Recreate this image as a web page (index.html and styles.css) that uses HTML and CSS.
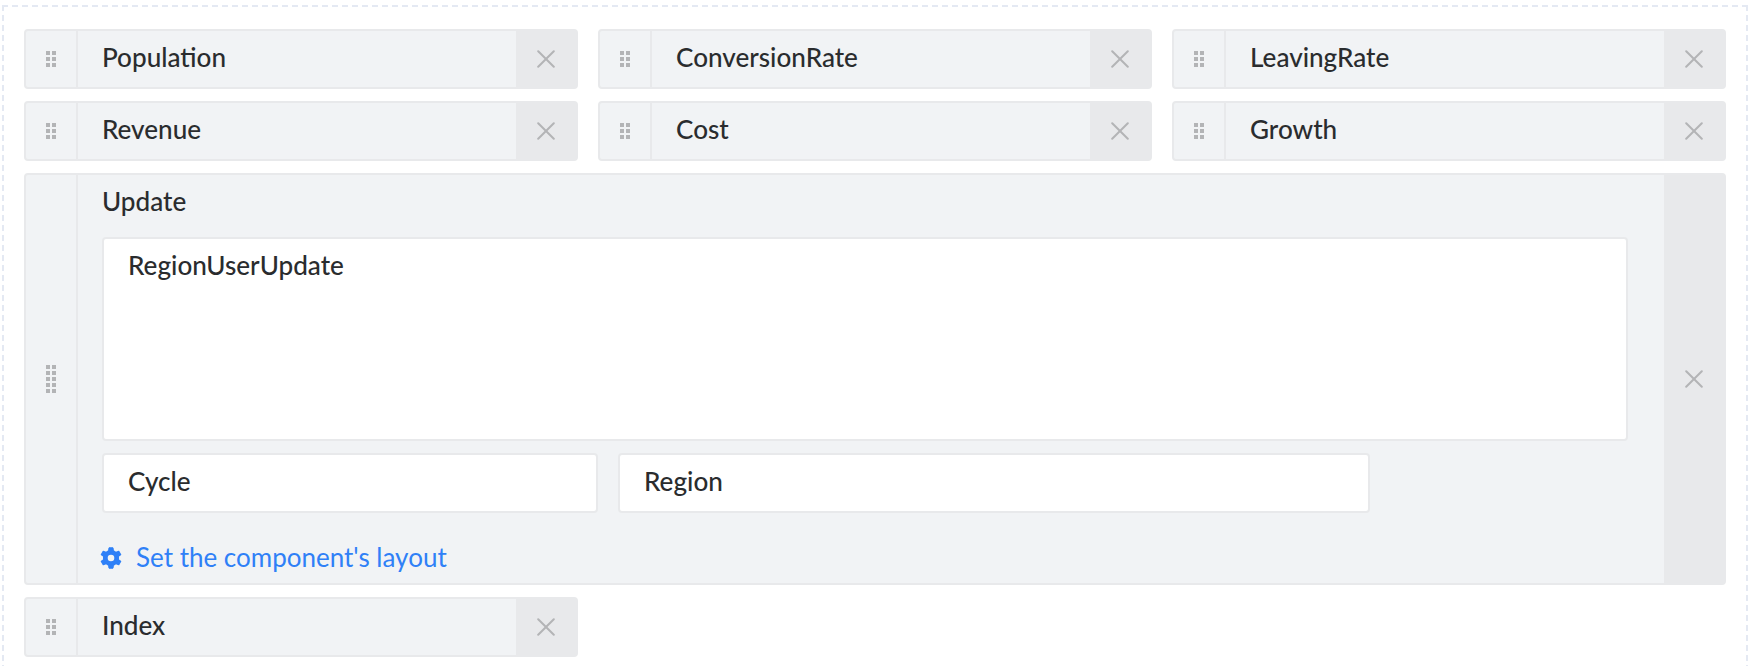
FILE: index.html
```html
<!DOCTYPE html>
<html lang="en">
<head>
<meta charset="utf-8">
<title>Layout editor</title>
<link rel="stylesheet" href="styles.css">
</head>
<body>
<svg class="defs" aria-hidden="true">
  <symbol id="close" viewBox="0 0 18 18"><path d="M1.2 1.2 16.8 16.8M16.8 1.2 1.2 16.8" fill="none" stroke="currentColor" stroke-width="2" stroke-linecap="round"/></symbol>
  <symbol id="dots" viewBox="0 0 10 16"><path d="M0 0h4v4H0zM6 0h4v4H6zM0 6h4v4H0zM6 6h4v4H6zM0 12h4v4H0zM6 12h4v4H6z" fill="currentColor"/></symbol>
  <symbol id="dots-tall" viewBox="0 0 10 28"><path d="M0 0h4v4H0zM6 0h4v4H6zM0 6h4v4H0zM6 6h4v4H6zM0 12h4v4H0zM6 12h4v4H6zM0 18h4v4H0zM6 18h4v4H6zM0 24h4v4H0zM6 24h4v4H6z" fill="currentColor"/></symbol>
</svg>
<main class="canvas">
  <div class="card"><span class="handle"><svg class="dots"><use href="#dots"/></svg></span><span class="label">Population</span><button class="close"><svg class="x"><use href="#close"/></svg></button></div>
  <div class="card"><span class="handle"><svg class="dots"><use href="#dots"/></svg></span><span class="label">ConversionRate</span><button class="close"><svg class="x"><use href="#close"/></svg></button></div>
  <div class="card"><span class="handle"><svg class="dots"><use href="#dots"/></svg></span><span class="label">LeavingRate</span><button class="close"><svg class="x"><use href="#close"/></svg></button></div>
  <div class="card"><span class="handle"><svg class="dots"><use href="#dots"/></svg></span><span class="label">Revenue</span><button class="close"><svg class="x"><use href="#close"/></svg></button></div>
  <div class="card"><span class="handle"><svg class="dots"><use href="#dots"/></svg></span><span class="label">Cost</span><button class="close"><svg class="x"><use href="#close"/></svg></button></div>
  <div class="card"><span class="handle"><svg class="dots"><use href="#dots"/></svg></span><span class="label">Growth</span><button class="close"><svg class="x"><use href="#close"/></svg></button></div>
  <section class="card group">
    <span class="handle"><svg class="dots tall"><use href="#dots-tall"/></svg></span>
    <div class="content">
      <div class="title">Update</div>
      <div class="field area">RegionUserUpdate</div>
      <div class="fields">
        <div class="field cycle">Cycle</div>
        <div class="field region">Region</div>
      </div>
      <a class="link"><svg class="gear" viewBox="0 0 22 22"><g fill="none" stroke="currentColor"><circle cx="11" cy="11" r="5.7" stroke-width="4.8"/><path id="tooth" d="M8.6 3.800 9 .8h4l.4 3z" fill="currentColor" stroke-width="1" stroke-linejoin="round"/><use href="#tooth" transform="rotate(60 11 11)"/><use href="#tooth" transform="rotate(120 11 11)"/><use href="#tooth" transform="rotate(180 11 11)"/><use href="#tooth" transform="rotate(240 11 11)"/><use href="#tooth" transform="rotate(300 11 11)"/></g></svg><span>Set the component's layout</span></a>
    </div>
    <button class="close"><svg class="x"><use href="#close"/></svg></button>
  </section>
  <div class="card"><span class="handle"><svg class="dots"><use href="#dots"/></svg></span><span class="label">Index</span><button class="close"><svg class="x"><use href="#close"/></svg></button></div>
</main>
</body>
</html>
```
FILE: styles.css
```css
* { box-sizing: border-box; }
html { overflow: hidden; background: #fff; }
body {
  margin: 0;
  padding: 5px 8px 0 2px;
  height: 666px;
  overflow: hidden;
  font-family: "Lato Medium", Lato, sans-serif;
  font-size: 26.1px;
  font-weight: 500;
  line-height: 32px;
  color: #2a2c2e;
}
.defs { display: none; }
.canvas {
  height: 746px;
  border: 2px dashed #e4e9f3;
  padding: 22px 20px;
  display: grid;
  grid-template-columns: repeat(3, 1fr);
  grid-auto-rows: min-content;
  gap: 12px 20px;
}
.card {
  display: flex;
  height: 60px;
  border: 2px solid #e8e9eb;
  border-radius: 4px;
  background: #f1f3f5;
}
.handle {
  flex: none;
  width: 52px;
  border-right: 2px solid #e8e9eb;
  display: flex;
  align-items: center;
  justify-content: center;
  color: #b3b4b6;
}
.dots { width: 10px; height: 16px; }
.dots.tall { height: 28px; }
.label { flex: 1; padding: 10px 24px; }
.close {
  flex: none;
  width: 60px;
  padding: 0;
  border: 0;
  background: #e8e9eb;
  color: #b3b4b6;
  display: flex;
  align-items: center;
  justify-content: center;
}
.x { width: 18px; height: 18px; }
.group { grid-column: 1 / -1; height: 412px; }
.content { flex: 1; padding: 10px 36px 0 24px; }
.title { margin-bottom: 20px; }
.field {
  height: 60px;
  padding: 10px 24px;
  border: 2px solid #e8e9eb;
  border-radius: 4px;
  background: #fff;
}
.area { height: 204px; }
.fields { display: flex; gap: 20px; margin-top: 12px; }
.cycle { width: 496px; }
.region { width: 752px; }
.link {
  display: flex;
  align-items: center;
  gap: 14px;
  margin: 28px 0 0 -2px;
  font-family: Lato, sans-serif;
  font-size: 26px;
  font-weight: 400;
  color: #2f80f7;
}
.gear { width: 22px; height: 22px; margin-top: 2px; }
```
